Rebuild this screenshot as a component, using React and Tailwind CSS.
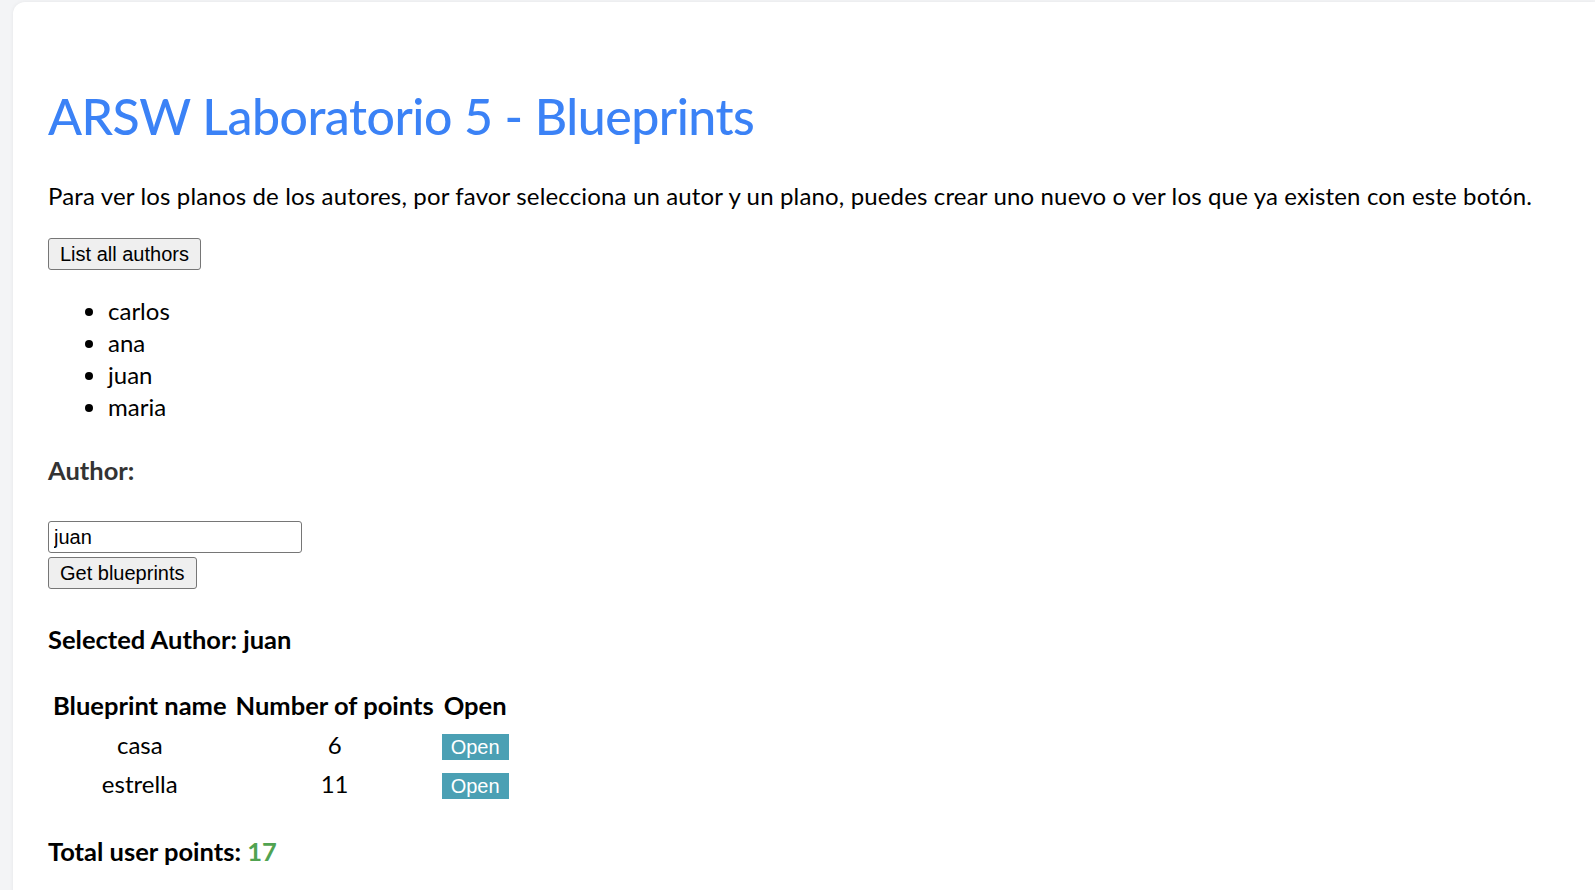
const authors = ['carlos', 'ana', 'juan', 'maria']

const blueprints = [
  { name: 'casa', points: 6 },
  { name: 'estrella', points: 11 },
]

const btn =
  "block rounded-[3px] border border-[#767676] bg-[#efefef] px-[11px] font-['Liberation_Sans',Arial,sans-serif] text-[20px] leading-[30px] text-black"

export default function App() {
  const total = blueprints.reduce((s, b) => s + b.points, 0)

  return (
    <div className="min-h-[890px] bg-[#f3f4f6] pl-[13px] pt-[2px]">
      <div className="min-h-[888px] rounded-tl-[12px] bg-white pl-[35px] pt-[83px] pb-10 font-['Lato',sans-serif] text-black shadow-[0_0_4px_rgba(0,0,0,0.06)]">
        <h1 className="text-[50px] leading-[62px] font-medium tracking-[-0.5px] text-[#3b82f6]">ARSW Laboratorio 5 - Blueprints</h1>

        <p className="mt-[34px] text-[24px] leading-[30px] tracking-[0.15px]">
          Para ver los planos de los autores, por favor selecciona un autor y un plano, puedes crear uno nuevo o ver los que ya existen con este botón.
        </p>

        <button className={`${btn} mt-[27px]`}>List all authors</button>

        <ul className="mt-[25px] list-disc pl-[60px] text-[24px] leading-[32px]">
          {authors.map((a) => (
            <li key={a}>{a}</li>
          ))}
        </ul>

        <h3 className="mt-[32px] text-[25.5px] leading-[30px] font-bold text-[#333]">Author:</h3>

        <input
          readOnly
          value="juan"
          className="mt-[36px] block h-[32px] w-[254px] rounded-[3px] border border-[#767676] px-[5px] font-['Liberation_Sans',Arial,sans-serif] text-[20px] text-black outline-none"
        />
        <button className={`${btn} mt-[4px]`}>Get blueprints</button>

        <h3 className="mt-[35px] text-[25.5px] leading-[30px] font-bold">Selected Author: juan</h3>

        <table className="mt-[32px] text-[24px]">
          <thead>
            <tr className="h-[39px] text-[25.5px]">
              <th className="px-[5px] font-bold">Blueprint name</th>
              <th className="px-[4px] font-bold">Number of points</th>
              <th className="px-[4px] font-bold">Open</th>
            </tr>
          </thead>
          <tbody>
            {blueprints.map((b) => (
              <tr key={b.name} className="h-[39px]">
                <td className="px-[5px] text-center">{b.name}</td>
                <td className="px-[4px] text-center">{b.points}</td>
                <td className="px-[4px] text-center">
                  <button className="h-[26px] bg-[#4ba0b4] px-[9px] font-['Liberation_Sans',Arial,sans-serif] text-[20px] leading-[26px] text-white">
                    Open
                  </button>
                </td>
              </tr>
            ))}
          </tbody>
        </table>

        <h3 className="mt-[33px] text-[25.5px] leading-[30px] font-bold">
          Total user points: <span className="text-[#51a351]">{total}</span>
        </h3>
      </div>
    </div>
  )
}
